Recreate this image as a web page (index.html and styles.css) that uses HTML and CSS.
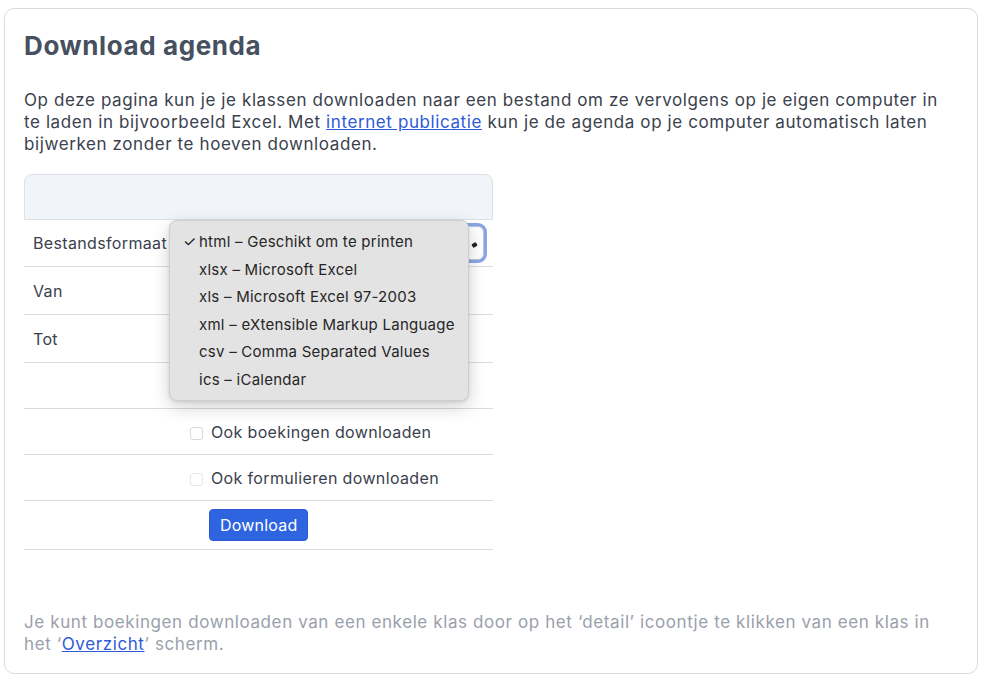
FILE: index.html
```html
<!DOCTYPE html>
<html lang="nl">
<head>
<meta charset="utf-8">
<title>Download agenda</title>
<link rel="stylesheet" href="styles.css">
</head>
<body>
<div class="card">
  <h1 class="title">Download agenda</h1>
  <p class="intro">Op deze pagina kun je je klassen downloaden naar een bestand om ze vervolgens op je eigen computer in te laden in bijvoorbeeld Excel. Met <a href="#">internet publicatie</a> kun je de agenda op je computer automatisch laten bijwerken zonder te hoeven downloaden.</p>

  <div class="table">
    <div class="thead"></div>
    <div class="row row-select">
      <div class="label">Bestandsformaat</div>
      <div class="value">
        <div class="select"><span class="caret"></span></div>
        <div class="popup">
          <div class="opt"><span class="check">✓</span>html – Geschikt om te printen</div>
          <div class="opt"><span class="check"></span>xlsx – Microsoft Excel</div>
          <div class="opt"><span class="check"></span>xls – Microsoft Excel 97-2003</div>
          <div class="opt"><span class="check"></span>xml – eXtensible Markup Language</div>
          <div class="opt"><span class="check"></span>csv – Comma Separated Values</div>
          <div class="opt"><span class="check"></span>ics – iCalendar</div>
        </div>
      </div>
    </div>
    <div class="row row-date"><div class="label">Van</div><div class="value"></div></div>
    <div class="row row-date"><div class="label">Tot</div><div class="value"></div></div>
    <div class="row row-empty"><div class="label"></div><div class="value"></div></div>
    <div class="row row-check"><div class="label"></div><div class="value"><span class="box"></span>Ook boekingen downloaden</div></div>
    <div class="row row-check"><div class="label"></div><div class="value"><span class="box faint"></span>Ook formulieren downloaden</div></div>
    <div class="row row-button"><div class="label"></div><div class="value"><button class="btn">Download</button></div></div>
  </div>

  <p class="note">Je kunt boekingen downloaden van een enkele klas door op het ‘detail’ icoontje te klikken van een klas in het ‘<a href="#">Overzicht</a>’ scherm.</p>
</div>
</body>
</html>
```

FILE: styles.css
```css
* { box-sizing: border-box; }
html, body { margin: 0; padding: 0; background: #ffffff; }
body {
  font-family: Inter, "Liberation Sans", Arial, sans-serif;
  color: #3b4250;
  width: 984px;
  height: 683px;
  overflow: hidden;
}
.card {
  margin: 8px 6px 0 4px;
  height: 666px;
  border: 1px solid #d9dbdf;
  border-radius: 10px;
  padding: 0 20px 0 19px;
  display: flex;
  flex-direction: column;
}
.title {
  margin: 22px 0 0 0;
  font-size: 26px;
  line-height: 30px;
  font-weight: bold;
  letter-spacing: 0.6px;
  color: #47505f;
}
.intro {
  margin: 28px 0 0 0;
  font-size: 17px;
  line-height: 22px;
  letter-spacing: 0.6px;
  color: #3a414d;
}
.intro a, .note a { color: #2d5ad8; text-decoration: underline; }
.table {
  margin-top: 19px;
  width: 469px;
}
.thead {
  height: 46px;
  background: #f1f4f8;
  border: 1px solid #dde1e7;
  border-radius: 8px 8px 0 0;
}
.row {
  display: flex;
  align-items: center;
  border-bottom: 1px solid #d8dbe0;
  font-size: 16px;
  letter-spacing: 0.35px;
  color: #3a414d;
}
.label { width: 148px; padding-left: 9px; flex-shrink: 0; white-space: nowrap; }
.value { flex: 1; display: flex; align-items: center; position: relative; }
.row-select { height: 47px; }
.row-date { height: 48px; }
.row-empty { height: 46px; }
.row-check { height: 46px; }
.row-button { height: 49px; }

.select {
  margin-left: 0;
  width: 312px;
  height: 34px;
  border: 1px solid #b8c4dc;
  border-radius: 6px;
  box-shadow: 0 0 0 3px #8aa6e6;
  background: #ffffff;
  position: relative;
}
.caret {
  position: absolute;
  right: 6px;
  top: 16px;
  width: 5px;
  height: 4px;
  background: #222;
  border-radius: 1px;
  transform: rotate(-30deg);
}

.popup {
  position: absolute;
  left: -3px;
  top: -6px;
  width: 300px;
  height: 181px;
  background: #e3e3e3;
  border: 1px solid #cfcfcf;
  border-radius: 8px;
  box-shadow: 0 6px 18px rgba(0, 0, 0, 0.18), 0 1px 3px rgba(0, 0, 0, 0.1);
  padding-top: 7px;
  z-index: 5;
}
.opt {
  height: 27.6px;
  line-height: 27.6px;
  font-size: 15px;
  letter-spacing: 0.25px;
  color: #262626;
  display: flex;
  padding-left: 13px;
}
.check { width: 16px; font-size: 15px; color: #1c1c1c; }

.box {
  width: 13px;
  height: 13px;
  border: 1px solid #d6d8dc;
  border-radius: 3px;
  margin-left: 18px;
  margin-right: 8px;
  margin-top: 3px;
  background: #fff;
}
.box.faint { border-color: #e6e7ea; }

.btn {
  margin-left: 37px;
  height: 32px;
  padding: 0 10px;
  background: #2f64e1;
  color: #ffffff;
  border: 1px solid #2a5bd0;
  border-radius: 4px;
  font-family: inherit;
  font-size: 16px;
  letter-spacing: 0.2px;
}

.note {
  margin: 61px 0 0 0;
  font-size: 17px;
  line-height: 22px;
  letter-spacing: 0.6px;
  color: #9aa0ab;
}
```
